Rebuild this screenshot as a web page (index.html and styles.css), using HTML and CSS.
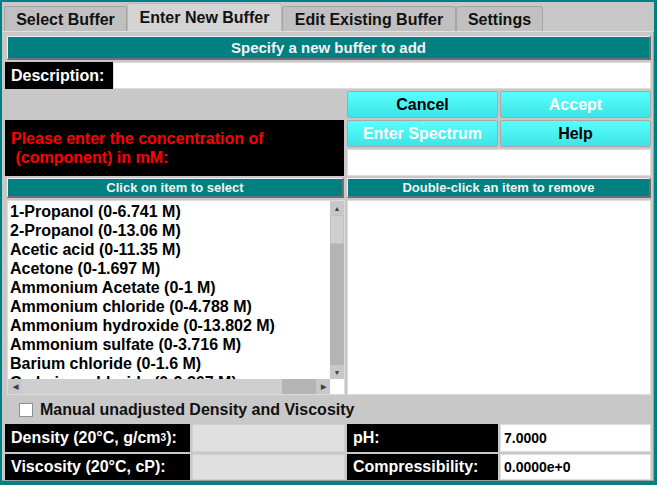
FILE: index.html
```html
<!DOCTYPE html>
<html lang="en">
<head>
  <meta charset="UTF-8">
  <title>Enter New Buffer</title>
  <link rel="stylesheet" href="styles.css">
</head>
<body>
<div class="ventana">
  <div class="pestanas">
    <div class="pestana p1">Select Buffer</div>
    <div class="pestana p2 activa">Enter New Buffer</div>
    <div class="pestana p3">Edit Existing Buffer</div>
    <div class="pestana p4">Settings</div>
  </div>

  <div class="panel">
    <div class="titulo">Specify a new buffer to add</div>

    <div class="etiqueta desc-lbl">Description:</div>
    <div class="entrada desc-in"></div>

    <button class="boton b-cancel">Cancel</button>
    <button class="boton b-accept apagado">Accept</button>

    <div class="aviso">Please enter the concentration of
 (component) in mM:</div>
    <button class="boton b-spec apagado">Enter Spectrum</button>
    <button class="boton b-help">Help</button>
    <div class="entrada conc-in"></div>

    <div class="barra b-izq">Click on item to select</div>
    <div class="barra b-der">Double-click an item to remove</div>

    <div class="lista l-izq">
      <div class="items">
        <div>1-Propanol (0-6.741 M)</div>
        <div>2-Propanol (0-13.06 M)</div>
        <div>Acetic acid (0-11.35 M)</div>
        <div>Acetone (0-1.697 M)</div>
        <div>Ammonium Acetate (0-1 M)</div>
        <div>Ammonium chloride (0-4.788 M)</div>
        <div>Ammonium hydroxide (0-13.802 M)</div>
        <div>Ammonium sulfate (0-3.716 M)</div>
        <div>Barium chloride (0-1.6 M)</div>
        <div>Cadmium chloride (0-2.367 M)</div>
      </div>
      <div class="scroll-v">
        <div class="flecha">&#9650;</div>
        <div class="pulgar-v"></div>
        <div class="pista"></div>
        <div class="flecha">&#9660;</div>
      </div>
      <div class="scroll-h">
        <div class="flecha">&#9664;</div>
        <div class="pulgar-h"></div>
        <div class="pista"></div>
        <div class="flecha">&#9654;</div>
      </div>
      <div class="esquina"></div>
    </div>
    <div class="lista l-der"></div>

    <div class="check">
      <span class="caja"></span>
      <span>Manual unadjusted Density and Viscosity</span>
    </div>

    <div class="etiqueta f9 c1">Density (20°C, g/cm<sup>3</sup>):</div>
    <div class="entrada gris f9 c2"></div>
    <div class="etiqueta f9 c3">pH:</div>
    <div class="entrada valor f9 c4">7.0000</div>

    <div class="etiqueta f10 c1">Viscosity (20°C, cP):</div>
    <div class="entrada gris f10 c2"></div>
    <div class="etiqueta f10 c3">Compressibility:</div>
    <div class="entrada valor f10 c4">0.0000e+0</div>
  </div>
</div>
</body>
</html>
```

FILE: styles.css
```css
body {
  margin: 0;
  padding: 0;
  background-color: #008080;
  font-family: "Liberation Sans", Arial, sans-serif;
  font-weight: bold;
}

.ventana {
  width: 652px;
  height: 479px;
  margin: 2px 0 0 2px;
  background-color: #c8c8c8;
  display: flex;
  flex-direction: column;
}

.pestanas {
  height: 29px;
  display: flex;
  align-items: flex-end;
  padding-left: 2px;
}

.pestana {
  height: 25px;
  box-sizing: border-box;
  border: 1px solid #a4a4a4;
  border-bottom: none;
  border-radius: 3px 3px 0 0;
  background-color: #c0c0c0;
  font-size: 16px;
  color: #111;
  display: flex;
  align-items: center;
  justify-content: center;
  padding-top: 2px;
}

.p1 { width: 123px; }
.p2 { width: 155px; }
.p3 { width: 174px; }
.p4 { width: 87px; }

.pestana.activa {
  height: 28px;
  background-color: #d4d4d4;
  border-color: #b8b8b8;
  padding-top: 0;
}

.panel {
  flex: 1;
  border-top: 1px solid #e0e0e0;
  border-right: 1px solid #a0a0a0;
  border-bottom: 1px solid #a0a0a0;
  padding: 3px 0 0 3px;
  display: grid;
  grid-template-columns: 185px 153px 151px 151px;
  grid-template-rows: 25px 27px 27px 27px 27px 20px 195px 25px 28px 26px;
  column-gap: 2px;
  row-gap: 2px;
}

/* filas y columnas */
.titulo { grid-column: 1 / 5; grid-row: 1; }
.desc-lbl { grid-column: 1; grid-row: 2; width: 106px; }
.desc-in { grid-column: 1 / 5; grid-row: 2; margin-left: 108px; }
.b-cancel { grid-column: 3; grid-row: 3; }
.b-accept { grid-column: 4; grid-row: 3; }
.aviso { grid-column: 1 / 3; grid-row: 4 / 6; }
.b-spec { grid-column: 3; grid-row: 4; }
.b-help { grid-column: 4; grid-row: 4; }
.conc-in { grid-column: 3 / 5; grid-row: 5; }
.b-izq { grid-column: 1 / 3; grid-row: 6; }
.b-der { grid-column: 3 / 5; grid-row: 6; }
.l-izq { grid-column: 1 / 3; grid-row: 7; }
.l-der { grid-column: 3 / 5; grid-row: 7; }
.check { grid-column: 1 / 5; grid-row: 8; }
.f9 { grid-row: 9; }
.f10 { grid-row: 10; }
.c1 { grid-column: 1; }
.c2 { grid-column: 2; }
.c3 { grid-column: 3; }
.c4 { grid-column: 4; }

.titulo, .barra {
  background-color: #008080;
  color: #f4f4f4;
  border-top: 1px solid #f0f0f0;
  border-left: 1px solid #f0f0f0;
  border-right: 2px solid #707070;
  border-bottom: 2px solid #707070;
  display: flex;
  align-items: center;
  justify-content: center;
  font-size: 15px;
  margin-left: 2px;
}

.titulo { margin-top: 1px; }

.barra {
  font-size: 13px;
}

.b-izq { margin-right: 1px; }
.b-der { margin-left: 0; }

.etiqueta {
  background-color: #000;
  color: #fff;
  font-size: 16px;
  display: flex;
  align-items: center;
  padding-left: 6px;
  white-space: nowrap;
}

.etiqueta sup {
  font-size: 10px;
  vertical-align: 6px;
  line-height: 0;
}

.entrada {
  background-color: #fff;
  border: 1px solid #dcdcdc;
  box-sizing: border-box;
}

.entrada.gris {
  background-color: #e0e0e0;
  border-color: #d0d0d0;
}

.entrada.valor {
  font-size: 14px;
  color: #000;
  display: flex;
  align-items: center;
  padding-left: 3px;
}

.boton {
  font-family: "Liberation Sans", Arial, sans-serif;
  font-weight: bold;
  font-size: 16px;
  color: #000;
  background: linear-gradient(#58ffff, #3ee4e4);
  border: 1px solid #a8a8a8;
  border-radius: 2px;
  padding: 0;
}

.boton.apagado { color: #fff; }

.aviso {
  background-color: #000;
  color: #ff0000;
  font-size: 16px;
  line-height: 19px;
  white-space: pre;
  padding: 9px 0 0 6px;
  margin-right: 1px;
}

.lista {
  background-color: #fff;
  border: 1px solid #dcdcdc;
}

.l-izq {
  margin-left: 2px;
  display: grid;
  grid-template-columns: 1fr 14px;
  grid-template-rows: 1fr 15px;
  overflow: hidden;
}

.items {
  overflow: hidden;
  font-size: 16px;
  line-height: 19px;
  color: #000;
  padding: 1px 0 0 2px;
  white-space: nowrap;
}

.scroll-v {
  display: flex;
  flex-direction: column;
  background-color: #b4b4b4;
}

.scroll-h {
  display: flex;
  background-color: #b4b4b4;
}

.flecha {
  width: 14px;
  height: 14px;
  flex: none;
  background-color: #c8c8c8;
  color: #404040;
  font-size: 7px;
  display: flex;
  align-items: center;
  justify-content: center;
}

.scroll-h .flecha { width: 14px; height: 15px; }

.pulgar-v {
  height: 27px;
  background-color: #cfcfcf;
  border: 1px solid #c0c0c0;
}

.pulgar-h {
  width: 260px;
  background-color: #cfcfcf;
}

.pista { flex: 1; }

.esquina { background-color: #fff; }

.check {
  display: flex;
  align-items: center;
  gap: 7px;
  padding-left: 14px;
  font-size: 16px;
  color: #111;
}

.caja {
  width: 12px;
  height: 12px;
  background-color: #fff;
  border: 1px solid #909090;
}
```
